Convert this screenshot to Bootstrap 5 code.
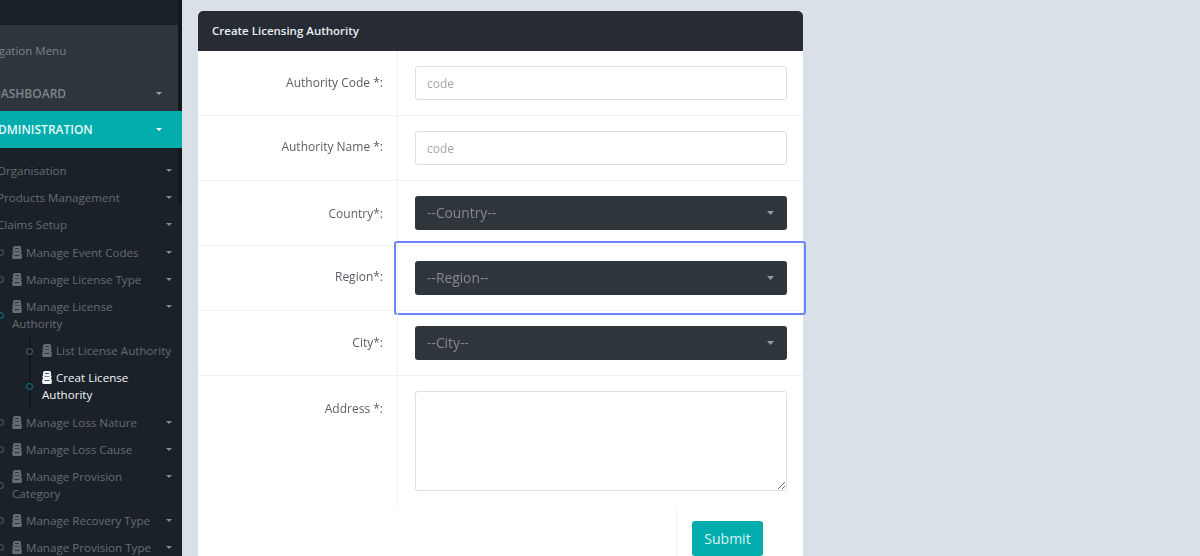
<!DOCTYPE html>
<html lang="en"><head><meta charset="utf-8"><title>Create Licensing Authority</title>
<link href="https://cdn.jsdelivr.net/npm/bootstrap@5.3.0/dist/css/bootstrap.min.css" rel="stylesheet">
<style>
html,body{height:556px;overflow:hidden}
body{background:#d9e0e8;font-family:"Open Sans","Noto Sans",sans-serif;font-size:12px}
.shell{height:556px;filter:blur(.45px)}
.side{width:182px;flex:none;background:#1a2128;overflow:hidden;position:relative;color:#6b7278}
.side-strip{position:absolute;right:0;top:0;width:4px;height:204px;background:#14191e;z-index:1}
.side-in{margin-left:-30px;margin-top:-12px}
.side-top{height:37px;line-height:16px;color:#6d747a;font-size:10.500px;padding-left:32px}
.side-head{background:#2e353c;height:86px}
.nav-cap{height:51px;padding:17px 0 0 5px;line-height:17px;font-size:11.500px;color:#7d8389}
.nav-main{height:35px;padding:0 23px 0 22px;font-weight:600;color:#7f858b;line-height:17px;font-size:12px}
.nav-active{height:37px;background:#00adac;color:#e6f8f8;position:relative;z-index:2;padding-left:20px}
.tree{padding-top:9px}
.ti{position:relative;display:flex;align-items:flex-start;line-height:17px;padding:5.100px 7px 5.100px 0;color:#666d73;font-size:11.600px}
.tail .ti{padding-top:5px;padding-bottom:5px}
.l1{padding-left:27px}.l2{padding-left:42px}.l3{padding-left:72px;padding-right:0}
.ti-txt{flex:1 1 auto;min-width:0}
.ti-cur{color:#f2f5f7}
.tri{display:inline-block;width:0;height:0;border:3.2px solid transparent;border-top:3.5px solid currentColor;border-bottom:0;flex:none}
.nav-main .tri{margin-right:-3px;color:#a0a5aa}
.nav-active .tri{color:#fff}
.ti>.tri{margin-top:7px;margin-right:3px;color:#868c91}
.gly{width:10px;height:13px;margin-right:4px;vertical-align:-2px;fill:#666d73}
.ti-cur .gly{fill:#f2f5f7}
.dot{position:absolute;width:7px;height:7px;border-radius:50%;border:1.500px solid #5d646a;top:50%;margin-top:-3px}
.l2 .dot{left:27px}.l3 .dot{left:56px}
.dot-on{border-color:#00888a}
.sub{position:relative}
.sub:before{content:"";position:absolute;left:59px;top:0;bottom:0;width:2px;background:#12171b}
.main{flex:1 1 auto;padding:11px 0 0 16px}
.panel{width:605px;border:0;border-radius:3px 3px 0 0;background:#fff;height:600px}
.panel-bar{height:40px;background:#272b33;color:#e9eef2;font-size:11.500px;font-weight:600;padding:0 14px;line-height:40px;border-radius:3px 3px 0 0;border:0}
.frow{display:flex;border-bottom:1px solid #f1f2f3;height:65px;position:relative}
.frow-last{border-bottom:0;height:130px}
.flab{width:200px;flex:none;text-align:right;padding:23px 14px 0 0;color:#5a5f64;font-size:12px;line-height:17px;border-right:1px solid #f1f2f3}
.flab-up{padding-top:22px}
.flab-down{padding-top:24px}
.fval{flex:1 1 auto;padding:15px 16px 0 17px}
.inp{height:34px;border:1px solid #dcdfe2;border-radius:3px;font-size:12px;padding:0 11px;box-shadow:none}
.inp::placeholder{color:#a3a7ab;opacity:1}
.sel{height:34px;border:0;border-radius:3px;background-color:#2e363c;color:#84898e;font-size:13.800px;padding:0 12px;line-height:34px;background-image:url("data:image/svg+xml,%3Csvg xmlns='http://www.w3.org/2000/svg' width='7' height='4'%3E%3Cpath d='M0 0h7L3.500 4z' fill='%23999'/%3E%3C/svg%3E");background-size:7px 4px;background-position:right 13px center;background-repeat:no-repeat}
.txa{height:100px;border:1px solid #dcdfe2;border-radius:3px;box-shadow:none}
.focusbox{position:absolute;left:196px;right:-3px;top:-5px;height:74px;border:2px solid #6d85fb;border-radius:3px;pointer-events:none}
.fend{display:flex;justify-content:flex-end}
.fend-in{width:127px;border-left:1px solid #f1f2f3;padding:15px 0 0 15px}
.sbm{background:#00adac;border:0;color:#d8f5f4;font-size:14px;width:71px;height:35px;border-radius:3px;padding:0}
</style></head>
<body>
<svg width="0" height="0" class="position-absolute"><symbol id="g" viewBox="0 0 10 13"><path d="M3 0h4.500A1.500 1.500 0 0 1 9 1.500V4L8.500 4.600H9.500V6.400L9 7V8.200H9.800V11.500A1.500 1.500 0 0 1 8.300 13H1.700A1.500 1.500 0 0 1 .2 11.500V8.200H1V7L.5 6.400V4.600H1.500L1 4V2A2 2 0 0 1 3 0z"/><path d="M2.500 5.400h5v.7h-5zM2.500 9h5v.7h-5zM3 2.200h4v.7H3z" fill="#1a2128"/></symbol></svg>
<div class="shell d-flex">
 <aside class="side">
  <div class="side-strip"></div>
  <div class="side-in">
   <div class="side-top">MAIN NAVIGATION</div>
   <div class="side-head">
    <div class="nav-cap">Navigation Menu</div>
    <div class="nav-main d-flex justify-content-between align-items-center">DASHBOARD<span class="tri"></span></div>
   </div>
   <div class="nav-main nav-active d-flex justify-content-between align-items-center">ADMINISTRATION<span class="tri"></span></div>
   <div class="tree">
    <div class="ti l1"><span class="ti-txt">Organisation</span><span class="tri"></span></div>
    <div class="ti l1"><span class="ti-txt">Products Management</span><span class="tri"></span></div>
    <div class="ti l1"><span class="ti-txt">Claims Setup</span><span class="tri"></span></div>
    <div class="ti l2"><i class="dot"></i><span class="ti-txt"><svg class="gly"><use href="#g"/></svg>Manage Event Codes</span><span class="tri"></span></div>
    <div class="ti l2"><i class="dot"></i><span class="ti-txt"><svg class="gly"><use href="#g"/></svg>Manage License Type</span><span class="tri"></span></div>
    <div class="ti l2"><i class="dot dot-on"></i><span class="ti-txt"><svg class="gly"><use href="#g"/></svg>Manage License<br>Authority</span><span class="tri"></span></div>
    <div class="sub">
     <div class="ti l3"><i class="dot"></i><span class="ti-txt"><svg class="gly"><use href="#g"/></svg>List License Authority</span></div>
     <div class="ti l3 ti-cur"><i class="dot dot-on"></i><span class="ti-txt"><svg class="gly"><use href="#g"/></svg>Creat License<br>Authority</span></div>
    </div>
    <div class="tail">
    <div class="ti l2"><i class="dot"></i><span class="ti-txt"><svg class="gly"><use href="#g"/></svg>Manage Loss Nature</span><span class="tri"></span></div>
    <div class="ti l2"><i class="dot"></i><span class="ti-txt"><svg class="gly"><use href="#g"/></svg>Manage Loss Cause</span><span class="tri"></span></div>
    <div class="ti l2"><i class="dot"></i><span class="ti-txt"><svg class="gly"><use href="#g"/></svg>Manage Provision<br>Category</span><span class="tri"></span></div>
    <div class="ti l2"><i class="dot"></i><span class="ti-txt"><svg class="gly"><use href="#g"/></svg>Manage Recovery Type</span><span class="tri"></span></div>
    <div class="ti l2"><i class="dot"></i><span class="ti-txt"><svg class="gly"><use href="#g"/></svg>Manage Provision Type</span><span class="tri"></span></div>
    </div>
   </div>
  </div>
 </aside>
 <main class="main">
  <div class="card panel">
   <div class="card-header panel-bar">Create Licensing Authority</div>
   <form>
    <div class="frow"><label class="flab">Authority Code *:</label><div class="fval"><input class="form-control inp" placeholder="code"></div></div>
    <div class="frow"><label class="flab flab-up">Authority Name *:</label><div class="fval"><input class="form-control inp" placeholder="code"></div></div>
    <div class="frow"><label class="flab flab-down">Country*:</label><div class="fval"><select class="form-select sel"><option>--Country--</option></select></div></div>
    <div class="frow"><label class="flab flab-up">Region*:</label><div class="fval"><select class="form-select sel"><option>--Region--</option></select></div><div class="focusbox"></div></div>
    <div class="frow"><label class="flab">City*:</label><div class="fval"><select class="form-select sel"><option>--City--</option></select></div></div>
    <div class="frow frow-last"><label class="flab flab-down">Address *:</label><div class="fval"><textarea class="form-control txa"></textarea></div></div>
    <div class="fend"><div class="fend-in"><button type="button" class="btn sbm">Submit</button></div></div>
   </form>
  </div>
 </main>
</div>
</body></html>
